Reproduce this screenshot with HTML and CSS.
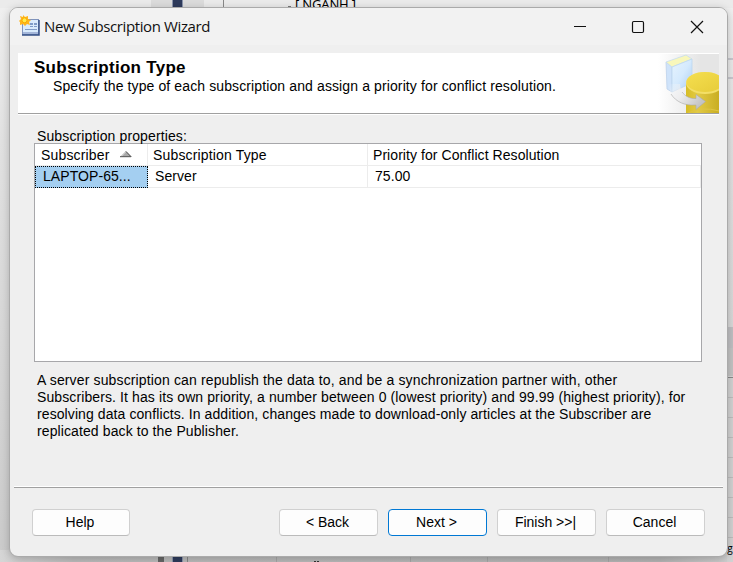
FILE: index.html
```html
<!DOCTYPE html>
<html lang="en">
<head>
<meta charset="utf-8">
<title>New Subscription Wizard</title>
<link rel="stylesheet" href="styles.css">
</head>
<body>
<svg class="backdrop" width="733" height="562" viewBox="0 0 733 562" aria-hidden="true">
  <defs>
    <linearGradient id="side" x1="0" y1="0" x2="0" y2="1"><stop offset="0" stop-color="#f0f0f0"/><stop offset=".25" stop-color="#e2e2e2"/><stop offset="1" stop-color="#cbcbcb"/></linearGradient>
    <linearGradient id="foot" x1="0" y1="0" x2="1" y2="0"><stop offset="0" stop-color="#d6d6d6"/><stop offset=".1" stop-color="#bdbdbd"/><stop offset=".9" stop-color="#b5b5b5"/><stop offset="1" stop-color="#d0d0d0"/></linearGradient>
  </defs>
  <rect width="733" height="562" fill="url(#side)"/>
  <rect y="550" width="733" height="12" fill="url(#foot)"/>
  <rect width="733" height="8" fill="#ebebeb"/>
  <path fill="#dcdcdc" d="M151 0h53v8h-53z"/>
  <path fill="#2e3b5c" d="M173 0h9v8h-9zM173 555h9v7h-9z"/>
  <path fill="#8b95ad" d="M172 0h1v8h-1zM182 0h1v8h-1zM172 555h1v7h-1zM182 555h1v7h-1z"/>
  <path fill="#666" d="M158 555h6v7h-6z"/>
  <path fill="#888" d="M223 0h1v8h-1zM187 555h1v7h-1zM727 377h6v1h-6z"/>
  <path fill="#c8c8cf" d="M727 58h6v2h-6zM727 77h6v2h-6z"/>
  <path fill="#bfbfc2" d="M727 327h6v21h-6z"/>
  <path fill="#c3c3c3" d="M727 348h6v28h-6z"/>
  <rect x="727" y="378" width="6" height="184" fill="#d2d2d2"/>
  <path fill="#bdbdbd" d="M727 397h6v1h-6zM727 417h6v1h-6zM727 437h6v1h-6zM727 457h6v1h-6zM727 477h6v1h-6zM727 497h6v1h-6zM727 517h6v1h-6zM727 537h6v1h-6z"/>
  <path fill="#a6a6a6" d="M276 557h1v5h-1zM410 557h1v5h-1zM487 557h1v5h-1zM608 557h1v5h-1z"/>
  <text x="295" y="9" class="behind" textLength="61">[ NGANH ]</text>
  <rect x="288" y="6" width="3" height="2" fill="#777"/>
  <text x="721" y="552" class="behind-small">ng</text>
  <path fill="#333" d="M314 561h2v1h-2zM317 561h2v1h-2z"/>
</svg>
<main class="window">
  <header class="titlebar">
    <svg class="app-icon" width="22" height="22" viewBox="0 0 22 22" aria-hidden="true">
      <rect x="3.5" y="4.5" width="16" height="15" fill="#d9ebfc" stroke="#8094bd"/>
      <path d="M3 20h17V5" fill="none" stroke="#345087" stroke-width="1.5"/>
      <path fill="#7f9cc7" d="M11 8h3v2h-3zM15 8h3v2h-3zM11 11h3v1h-3zM15 11h3v1h-3zM6 14h12v1H6z"/>
      <path fill="#a3b6d9" d="M4 17h15v2H4z"/>
      <path fill="#ffb51b" d="M4 0l2 2 3-1v3l3 1-2 2 1 3-3-1-2 2-2-2-3 1V7L0 6l2-2-1-3 3 1z"/>
      <circle cx="5.5" cy="5.3" r="2.5" fill="#ffeb4b" stroke="#f9a800"/>
    </svg>
    <h1 class="title">New Subscription Wizard</h1>
    <svg class="controls" width="132" height="16" viewBox="0 0 132 16" fill="none" stroke="#111" aria-hidden="true">
      <path d="M1 7.5h12"/><rect x="59.5" y="2.5" width="11" height="11" rx="1.2" stroke-width="1.2"/>
      <path d="M118 2l12 12M130 2l-12 12" stroke-width="1.2"/>
    </svg>
  </header>
  <section class="banner">
    <div class="banner-copy">
      <h2 class="heading">Subscription Type</h2>
      <p class="lead">Specify the type of each subscription and assign a priority for conflict resolution.</p>
    </div>
    <svg class="art" width="61" height="60" viewBox="658 53 61 60" aria-hidden="true">
      <defs>
        <linearGradient id="fade"><stop offset="0" stop-color="#fff"/><stop offset=".7" stop-color="#e5e5e5"/></linearGradient>
        <linearGradient id="cover" x1="0" y1="0" x2="1" y2="1"><stop offset="0" stop-color="#e6f3fe"/><stop offset=".5" stop-color="#d5eafd"/><stop offset="1" stop-color="#a7cbf4"/></linearGradient>
        <linearGradient id="gold"><stop offset="0" stop-color="#d7bd24"/><stop offset=".35" stop-color="#e2ca45"/><stop offset="1" stop-color="#c9ae22"/></linearGradient>
        <linearGradient id="top" x1="0" y1="0" x2="1" y2="1"><stop offset="0" stop-color="#f5df50"/><stop offset="1" stop-color="#e6cb38"/></linearGradient>
        <linearGradient id="arrow" x1="0" y1="0" x2="1" y2=".5"><stop offset="0" stop-color="#f4f6fa" stop-opacity="0"/><stop offset=".45" stop-color="#ededee"/><stop offset="1" stop-color="#c4c4c4"/></linearGradient>
      </defs>
      <path fill="url(#fade)" d="M658 54h61v59h-61z"/>
      <path fill="#cfe3fa" stroke="#bed2eb" stroke-width=".8" d="M666 62l6 5v25l-5-3z"/>
      <path fill="#f8f7bb" stroke="#c7dcef" stroke-width=".8" d="M666 62l20-7 6 4-20 8z"/>
      <path fill="url(#cover)" stroke="#bdd7ef" stroke-width=".8" d="M672 67l20-8v24l-20 9z"/>
      <path fill="url(#gold)" d="M686 83v30h33V78z"/>
      <ellipse cx="705" cy="83" rx="19" ry="11" fill="#f3df67"/>
      <ellipse cx="705" cy="82" rx="18.5" ry="10" fill="url(#top)"/>
      <path d="M688 113q14-7 31-2" fill="none" stroke="#dfc544"/>
      <path fill="url(#arrow)" d="M669 84C669 98 680 106 696 105V109.500L705.500 101.500L696 94.500V98.500C687 99 680 93 680 84z"/>
      <path fill="none" stroke="#aaa" stroke-width=".6" d="M671 94C676 102 685 106 696 105V109.500L705.500 101.500L696 94.500V98.500C690 99 685 96 682 92"/>
    </svg>
  </section>
  <section class="content">
    <p class="label">Subscription properties:</p>
    <div class="grid">
      <div class="row head">
        <div class="cell"><span>Subscriber</span><svg class="sort" width="12" height="7" viewBox="0 0 12 7"><path fill="#aaa" d="M6 0l6 6H0z"/><path d="M6 .5L.7 6" stroke="#ddd"/><path d="M6 .5l5 5.2H0" fill="none" stroke="#555"/></svg></div>
        <div class="cell">Subscription Type</div>
        <div class="cell">Priority for Conflict Resolution</div>
      </div>
      <div class="row data">
        <div class="cell selected">LAPTOP-65...</div>
        <div class="cell">Server</div>
        <div class="cell">75.00</div>
      </div>
    </div>
    <p class="info"><span class="opening">A server subscription can republish the data to, and be a synchronization partner with, other</span><br>Subscribers. It has its own priority, a number between 0 (lowest priority) and 99.99 (highest priority), for<br><span class="third">resolving data conflicts. In addition, changes made to download-only articles at the Subscriber are</span><br>replicated back to the Publisher.</p>
  </section>
  <footer class="actions">
    <button class="btn help">Help</button>
    <button class="btn">&lt; Back</button>
    <button class="btn primary">Next &gt;</button>
    <button class="btn">Finish &gt;&gt;|</button>
    <button class="btn">Cancel</button>
  </footer>
</main>
</body>
</html>
```
FILE: styles.css
```css
* { box-sizing: border-box; }
body {
  margin: 0;
  width: 733px;
  height: 562px;
  padding: 7px 5px 5px 9px;
  overflow: hidden;
  background: #dcdcdc;
  font: 14px/17px "Liberation Sans", Arial, sans-serif;
  color: #000;
}
h1, h2, p { margin: 0; font-weight: normal; white-space: nowrap; }
.backdrop { position: absolute; left: 0; top: 0; z-index: -1; }
.behind { font: 13px "Noto Sans", sans-serif; }
.behind-small { font: 10px "Open Sans", sans-serif; }
.window {
  display: flex;
  flex-direction: column;
  width: 719px;
  height: 550px;
  overflow: hidden;
  border: 1px solid #aaa;
  border-radius: 9px;
  background: #efefef;
  box-shadow: 0 2px 9px rgba(0, 0, 0, .22);
}
.titlebar {
  display: flex;
  align-items: center;
  height: 37px;
  padding: 0 22px 0 9px;
  background: #f2f2f2;
}
.app-icon { margin-top: -1px; }
.title { margin: -1px 0 0 3px; font: 15px/20px "Open Sans", sans-serif; letter-spacing: -.38px; color: #111; }
.controls { margin-left: auto; }
.banner {
  display: flex;
  justify-content: space-between;
  height: 61px;
  margin: 8px 8px 0;
  padding-left: 16px;
  background: #fff;
  border-bottom: 1px solid #a0a0a0;
  box-shadow: 0 1px #fff;
}
.banner-copy { padding-top: 5px; }
.heading { font-size: 17px; line-height: 20px; font-weight: bold; letter-spacing: .28px; }
.lead { padding-left: 19px; letter-spacing: .115px; }
.content { padding: 13px 24px 0; }
.label { padding-left: 3px; line-height: 18px; letter-spacing: .12px; }
.grid {
  height: 219px;
  margin-top: -2px;
  width: 668px;
  border: 1px solid #a7a7aa;
  background: #fff;
}
.row { display: grid; grid-template-columns: 113px 220px 333px; height: 22px; }
.cell {
  display: flex;
  align-items: center;
  padding-left: 6px;
  border-right: 1px solid #ececec;
  border-bottom: 1px solid #ececec;
  white-space: nowrap;
  letter-spacing: .07px;
}
.head .cell { padding-top: 2px; letter-spacing: .16px; }
.head .cell:last-child { border-right: 0; letter-spacing: .06px; }
.head .cell + .cell { padding-left: 5px; }
.data .cell { padding-left: 7px; }
.data .selected { padding-left: 7px; padding-bottom: 1px; border: 1px dotted #000; background: #a4cff1; }
.sort { margin: -3px 15px 0 auto; }
.info { margin-top: 10px; padding-left: 3px; letter-spacing: .105px; }
.opening { letter-spacing: .14px; }
.third { letter-spacing: .09px; }
.actions {
  display: flex;
  gap: 10px;
  margin: auto 4px 0;
  height: 69px;
  padding: 21px 18px 0;
  border-top: 1px solid #a0a0a0;
  box-shadow: 0 -1px #fff;
}
.btn {
  width: 99px;
  height: 27px;
  padding: 0 2px 0 0;
  border: 1px solid #d0d0d0;
  border-bottom-color: #bbb;
  border-radius: 4px;
  background: #fdfdfd;
  color: #000;
  font: inherit;
}
.help { width: 98px; margin-right: auto; }
.primary { border-color: #0078d4; }
```
